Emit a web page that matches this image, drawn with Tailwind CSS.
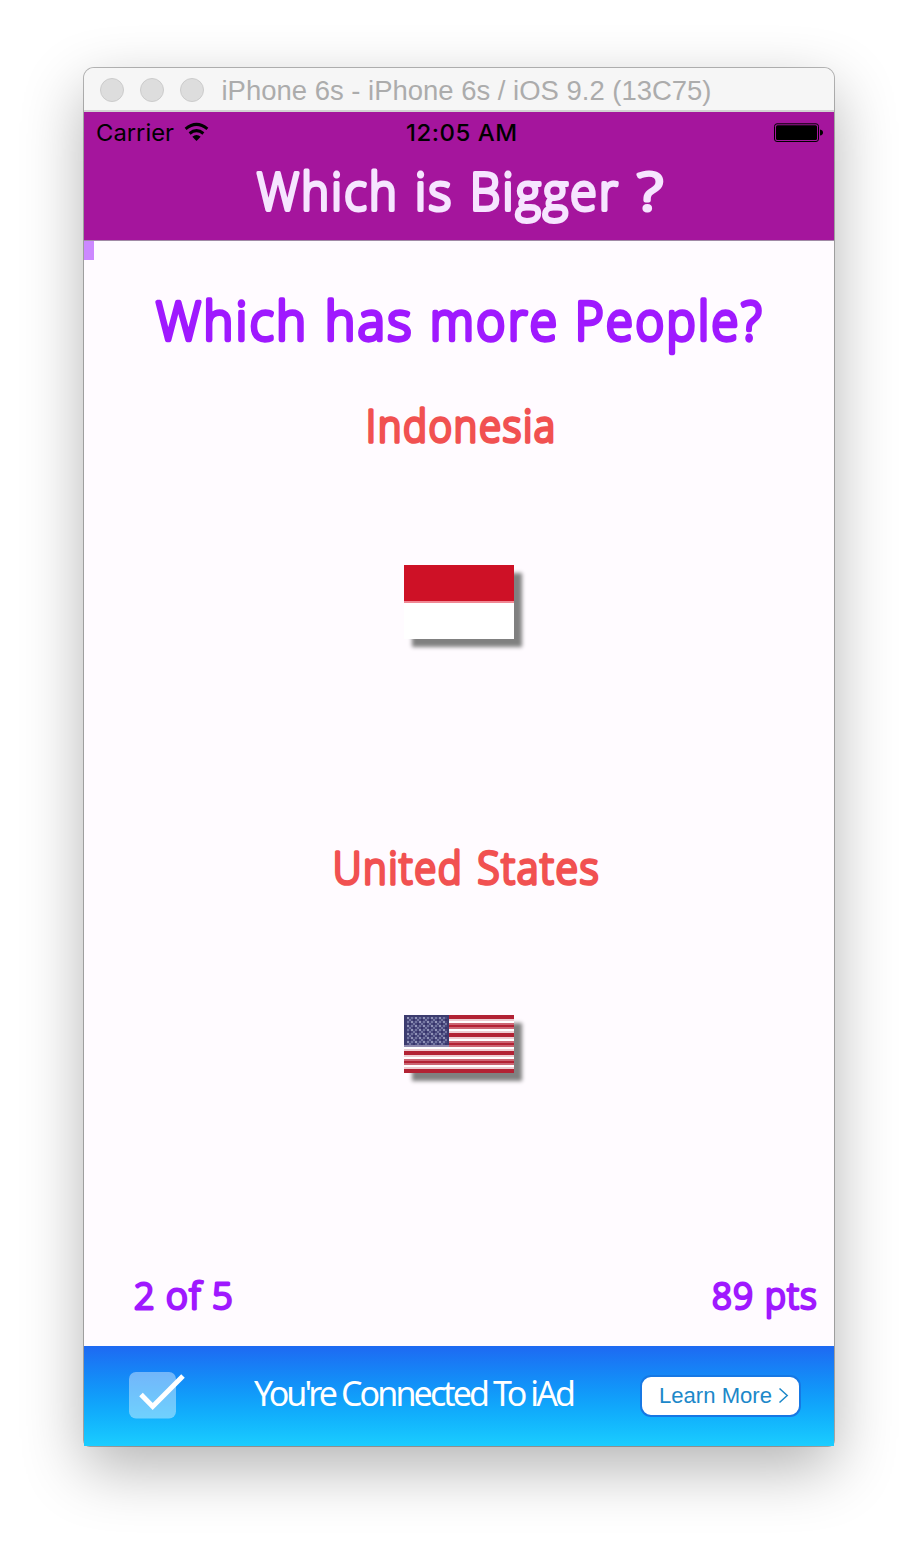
<!DOCTYPE html>
<html lang="en">
<head>
<meta charset="utf-8">
<title>iPhone 6s</title>
<script src="https://cdn.jsdelivr.net/npm/@tailwindcss/browser@4"></script>
</head>
<body class="bg-white h-[1546px] w-[918px] overflow-hidden flex justify-center pt-[68px]">
<main class="w-[750px] h-[1378px] flex flex-col rounded-t-[10px] rounded-b-[6px] shadow-[0_0_0_1px_rgba(0,0,0,0.27),0_22px_62px_rgba(0,0,0,0.3)]">
  <div class="h-11 shrink-0 flex items-center rounded-t-[10px] bg-[#f6f6f6] border-b-2 border-[#d2d2d2] pl-4 pt-px gap-4">
    <span class="size-6 rounded-full bg-[#dddddd] border border-[#cccccc]"></span>
    <span class="size-6 rounded-full bg-[#dddddd] border border-[#cccccc]"></span>
    <span class="size-6 rounded-full bg-[#dddddd] border border-[#cccccc]"></span>
    <svg class="h-10 w-[500px] overflow-visible" viewBox="0 0 500 40"><text x="1.500" y="30" textLength="490" lengthAdjust="spacingAndGlyphs" class="fill-[#acacac] text-[27px] font-['Liberation_Sans',sans-serif]">iPhone 6s - iPhone 6s / iOS 9.2 (13C75)</text></svg>
  </div>
  <header class="h-[129px] shrink-0 bg-[#a5159d] border-b border-[#a18aa6]">
    <svg class="block w-[750px] h-32" viewBox="0 0 750 128">
      <g class="fill-black font-['Inter',sans-serif]">
        <text x="12" y="29" textLength="78" lengthAdjust="spacingAndGlyphs" class="text-[23px]">Carrier</text>
        <text x="322" y="29" textLength="111.500" lengthAdjust="spacingAndGlyphs" class="text-[23.5px] font-medium tracking-[0.5px]">12:05 AM</text>
      </g>
      <g fill="none" stroke="#000" stroke-width="3">
        <path d="M101.600 16.800Q112.500 8 123.400 16.800"/>
        <path d="M105.600 21.500Q112.500 15.700 119.400 21.500"/>
      </g>
      <path d="M108.300 24.800Q112.500 21 116.700 24.800L112.500 29Z"/>
      <rect x="690.500" y="11.800" width="44" height="17.700" rx="2.500" fill="none" stroke="#000"/>
      <rect x="692" y="13.300" width="41" height="14.700" rx="1.500"/>
      <path d="M736 17.500q3 .5 3 3t-3 3z"/>
      <g class="fill-[#f6e5ff] stroke-[#f6e5ff] text-[51px] tracking-[2.5px] font-light font-['Open_Sans',sans-serif]" stroke-width="3.900" stroke-linejoin="round">
        <text x="173" y="97.800" textLength="142" lengthAdjust="spacingAndGlyphs">Which</text>
        <text x="331" y="97.800" textLength="38.500" lengthAdjust="spacingAndGlyphs">is</text>
        <text x="386" y="97.800" textLength="150" lengthAdjust="spacingAndGlyphs">Bigger</text>
        <text x="553" y="97.800" textLength="26" lengthAdjust="spacingAndGlyphs" class="tracking-normal">?</text>
      </g>
    </svg>
  </header>
  <section class="flex-1 bg-[#fffbff] flex flex-col">
    <div class="w-[10px] h-[19px] bg-[#cc88ff] shrink-0"></div>
    <svg class="block w-[750px] h-[240px] shrink-0" viewBox="0 192 750 240">
      <g class="fill-[#9f19ff] stroke-[#9f19ff] text-[54px] tracking-[2.8px] font-light font-['Open_Sans',sans-serif]" stroke-width="4.300" stroke-linejoin="round">
        <text x="72" y="271.800" textLength="152.500" lengthAdjust="spacingAndGlyphs">Which</text>
        <text x="241" y="271.800" textLength="89" lengthAdjust="spacingAndGlyphs">has</text>
        <text x="346" y="271.800" textLength="129.500" lengthAdjust="spacingAndGlyphs">more</text>
        <text x="491" y="271.800" textLength="189" lengthAdjust="spacingAndGlyphs">People?</text>
      </g>
      <text x="282" y="374" textLength="191" lengthAdjust="spacingAndGlyphs" class="fill-[#f15151] stroke-[#f15151] text-[43.5px] tracking-[2.2px] font-light font-['Open_Sans',sans-serif]" stroke-width="3.600" stroke-linejoin="round">Indonesia</text>
    </svg>
    <div class="ml-[320px] mt-[65px] w-[110px] h-[74px] shrink-0 shadow-[8px_8px_4px_#808080] flex flex-col bg-white">
      <div class="h-9 bg-[#ce1126]"></div>
      <div class="h-[2px] bg-[#f08894]"></div>
    </div>
    <svg class="block w-[750px] h-[90px] shrink-0 mt-[186px]" viewBox="0 757 750 90">
      <g class="fill-[#f15151] stroke-[#f15151] text-[43.5px] tracking-[2.2px] font-light font-['Open_Sans',sans-serif]" stroke-width="3.600" stroke-linejoin="round">
        <text x="249" y="815.800" textLength="130.500" lengthAdjust="spacingAndGlyphs">United</text>
        <text x="393.500" y="815.800" textLength="123" lengthAdjust="spacingAndGlyphs">States</text>
      </g>
    </svg>
    <svg class="block ml-[320px] mt-[100px] w-[110px] h-[58px] shrink-0 shadow-[8px_8px_4px_#808080]" viewBox="0 0 110 58" shape-rendering="crispEdges">
      <defs>
        <pattern id="stars" width="8" height="8" patternUnits="userSpaceOnUse" x="3" y="2">
          <rect width="8" height="8" fill="#48487c"/>
          <path d="M0 0h2v2H0zM4 4h2v2H4z" fill="#9294b8"/>
          <path d="M4 0h2v2H4zM0 4h2v2H0zM2 2h2v2H2zM6 6h2v2H6z" fill="#7274a0"/>
          <path d="M2 6h2v2H2zM6 2h2v2H6z" fill="#38356c"/>
        </pattern>
      </defs>
      <rect width="110" height="58" fill="#fff"/>
      <path fill="#b22234" d="M0 0h110v4H0zM0 10h110v2H0zM0 18h110v4H0zM0 28h110v2H0zM0 36h110v4H0zM0 46h110v2H0zM0 54h110v4H0z"/>
      <path fill="#cc6674" d="M0 8h110v2H0zM0 12h110v2H0zM0 26h110v2H0zM0 30h110v2H0zM0 44h110v2H0zM0 48h110v2H0z"/>
      <path fill="#edcdd2" d="M0 4h110v2H0zM0 16h110v2H0zM0 22h110v2H0zM0 34h110v2H0zM0 40h110v2H0zM0 52h110v2H0z"/>
      <rect width="45" height="32" fill="#8f89ad"/>
      <rect width="45" height="30" fill="#3c3b6e"/>
      <rect x="3" y="2" width="40" height="28" fill="url(#stars)"/>
    </svg>
    <svg class="block w-[750px] h-[80px] shrink-0 mt-auto mb-4" viewBox="0 1182 750 80">
      <g class="fill-[#9f19ff] stroke-[#9f19ff] text-[36.5px] tracking-[1.5px] font-light font-['Open_Sans',sans-serif]" stroke-width="3" stroke-linejoin="round">
        <text x="50" y="1241" textLength="22" lengthAdjust="spacingAndGlyphs">2</text>
        <text x="82" y="1241" textLength="36" lengthAdjust="spacingAndGlyphs">of</text>
        <text x="128" y="1241" textLength="22" lengthAdjust="spacingAndGlyphs">5</text>
        <text x="628" y="1241" textLength="42.500" lengthAdjust="spacingAndGlyphs">89</text>
        <text x="681" y="1241" textLength="53" lengthAdjust="spacingAndGlyphs">pts</text>
      </g>
    </svg>
  </section>
  <footer class="h-[100px] shrink-0 flex items-center bg-linear-to-b from-[#1e69f2] to-[#1bcdff]">
    <svg class="ml-[45px] w-[60px] h-[50px]" viewBox="0 0 60 50">
      <rect x="0" y="1" width="47" height="46.500" rx="7" fill="#fff" fill-opacity=".4"/>
      <path d="M12 23.500L23.700 35.500L54 5" fill="none" stroke="#fff" stroke-width="5"/>
    </svg>
    <svg class="ml-[65px] w-[330px] h-[60px]" viewBox="0 0 330 60"><text x="0" y="39.500" textLength="322" class="fill-white text-[34px] font-['Noto_Sans','Open_Sans',sans-serif]">You're Connected To iAd</text></svg>
    <div class="ml-[56px] w-[161px] h-[42px] rounded-[11px] border-2 border-[#1678e4] bg-white">
      <svg class="w-[157px] h-[38px]" viewBox="0 0 157 38">
        <text x="17" y="26" textLength="113" lengthAdjust="spacingAndGlyphs" class="fill-[#1c88c9] text-[22.5px] font-['Liberation_Sans',sans-serif]">Learn More</text>
        <path d="M137.500 11.500L145.200 18.500L137.500 25.500" fill="none" stroke="#1c88c9" stroke-width="1.500"/>
      </svg>
    </div>
  </footer>
</main>
</body>
</html>
